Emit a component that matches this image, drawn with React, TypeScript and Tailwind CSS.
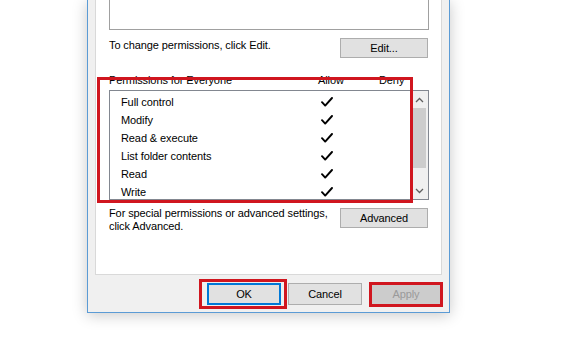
import React from 'react';

const font = { fontFamily: '"Liberation Sans", Arial, sans-serif' };

const permissions = [
  'Full control',
  'Modify',
  'Read & execute',
  'List folder contents',
  'Read',
  'Write',
];

const Check: React.FC = () => (
  <svg width="12" height="10" viewBox="0 0 12 10" className="block">
    <path d="M1 5.2 L4.2 8.6 L11 1" fill="none" stroke="#000" strokeWidth="1.9" strokeLinecap="round" strokeLinejoin="round" />
  </svg>
);

const Chevron: React.FC<{ up?: boolean }> = ({ up }) => (
  <svg width="9" height="6" viewBox="0 0 9 6" className="block">
    <path
      d={up ? 'M1 5 L4.5 1.5 L8 5' : 'M1 1 L4.5 4.5 L8 1'}
      fill="none"
      stroke="#606060"
      strokeWidth="1.3"
    />
  </svg>
);

const App: React.FC = () => {
  return (
    <div className="w-[580px] h-[345px] bg-white overflow-hidden text-[11px] tracking-[-0.1px] text-black" style={font}>
      {/* Window */}
      <div className="ml-[87px] w-[363px] h-[313px] border border-t-0 border-[#5b9bd5] bg-[#f0f0f0] shadow-[0_2px_14px_rgba(0,0,0,0.22)] flex flex-col">
        {/* Tab panel */}
        <div className="ml-[7px] w-[347px] h-[275px] border border-t-0 border-[#d9d9d9] bg-white pl-[13px] pr-[12px] flex flex-col">
          {/* Group / user names box */}
          <div className="h-[30px] border border-t-0 border-[#a0a0a0] bg-white" />

          {/* Edit row */}
          <div className="mt-[8px] flex items-start justify-between">
            <span className="leading-[15px] whitespace-nowrap">To change permissions, click Edit.</span>
            <button className="w-[88px] h-[20px] mr-[1px] bg-[#e1e1e1] border border-[#adadad] leading-[18px]">
              Edit...
            </button>
          </div>

          {/* Permissions list */}
          <div className="relative mt-[15px]">
            <div className="flex leading-[15px] whitespace-nowrap">
              <span className="w-[209px]">Permissions for Everyone</span>
              <span className="w-[61px]">Allow</span>
              <span>Deny</span>
            </div>
            <div className="mt-[2px] h-[110px] border border-[#828790] bg-white flex">
              <div className="flex-1 pt-[2px] pl-[11px]">
                {permissions.map((p) => (
                  <div key={p} className="h-[18px] flex items-center">
                    <span className="w-[200px] leading-[18px]">{p}</span>
                    <Check />
                  </div>
                ))}
              </div>
              {/* Scrollbar */}
              <div className="w-[17px] bg-[#f0f0f0] flex flex-col items-center">
                <div className="h-[17px] flex items-center justify-center">
                  <Chevron up />
                </div>
                <div className="w-[13px] h-[60px] bg-[#cdcdcd]" />
                <div className="flex-1" />
                <div className="h-[17px] flex items-center justify-center">
                  <Chevron />
                </div>
              </div>
            </div>
            {/* Highlight */}
            <div className="absolute -left-[12px] top-[4px] w-[316px] h-[126px] border-[3px] border-[#d0161f] pointer-events-none" />
          </div>

          {/* Advanced row */}
          <div className="mt-[8px] flex items-start justify-between">
            <span className="leading-[13px] -mt-[1px] whitespace-nowrap">
              For special permissions or advanced settings,
              <br />
              click Advanced.
            </span>
            <button className="w-[88px] h-[20px] mr-[1px] bg-[#e1e1e1] border border-[#adadad] leading-[18px]">
              Advanced
            </button>
          </div>
        </div>

        {/* Dialog buttons */}
        <div className="mt-[8px] pr-[6px] flex justify-end gap-[7px]">
          <div className="relative">
            <button className="w-[74px] h-[22px] bg-[#e1e1e1] border border-[#0078d7] shadow-[inset_0_0_0_1px_#0078d7]">
              OK
            </button>
            <div className="absolute -left-[8px] -top-[4px] w-[88px] h-[30px] border-[3px] border-[#d0161f] pointer-events-none" />
          </div>
          <button className="w-[74px] h-[22px] bg-[#e1e1e1] border border-[#adadad]">Cancel</button>
          <div className="relative">
            <button className="w-[74px] h-[22px] bg-[#cccccc] border border-[#bfbfbf] text-[#9a9a9a]">
              Apply
            </button>
            <div className="absolute left-0 -top-[1px] w-[74px] h-[25px] border-[3px] border-[#d0161f] pointer-events-none" />
          </div>
        </div>
      </div>
    </div>
  );
};

export default App;
